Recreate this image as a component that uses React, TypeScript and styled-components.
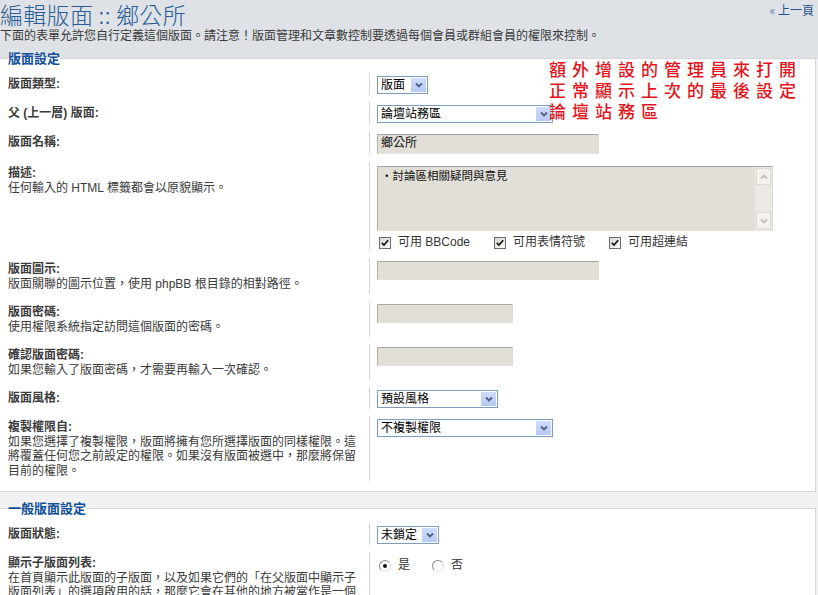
import React from 'react'
import styled, { createGlobalStyle } from 'styled-components'

const GlobalStyle = createGlobalStyle`
  html {
    min-height: 100%;
    background: linear-gradient(to bottom, #dee2e6 0, #dee2e6 59px, #f1f1f1 59px);
  }
  body {
    margin: 0;
    font-family: 'Liberation Sans', 'Noto Sans CJK TC', sans-serif;
    font-size: 12px;
    color: #333;
    overflow: hidden;
  }
`

const Chevron = ({ up = false }: { up?: boolean }) => (
  <svg width="8" height="6" viewBox="0 0 8 6">
    <path
      d={up ? 'M1 4.5 L4 1.5 L7 4.5' : 'M1 1.5 L4 4.5 L7 1.5'}
      fill="none"
      stroke="currentColor"
      strokeWidth="1.8"
    />
  </svg>
)

const Select = ({ width, value }: { width: number; value: string }) => (
  <SelectBox $w={width}>
    <span>{value}</span>
    <SelectArrow>
      <Chevron />
    </SelectArrow>
  </SelectBox>
)

const Check = ({ label }: { label: string }) => (
  <Option>
    <CheckBox>
      <svg width="8" height="8" viewBox="0 0 8 8">
        <path d="M0.8 3.8 L3 6 L7.2 1.3" fill="none" stroke="#111" strokeWidth="1.7" />
      </svg>
    </CheckBox>
    {label}
  </Option>
)

const Radio = ({ label, checked }: { label: string; checked?: boolean }) => (
  <Option>
    <RadioDot $checked={checked} />
    {label}
  </Option>
)

interface RowProps {
  label: string
  explain?: string
  children: React.ReactNode
}

const Row = ({ label, explain, children }: RowProps) => (
  <Item>
    <Term>
      <Label>{label}</Label>
      {explain && <Explain>{explain}</Explain>}
    </Term>
    <Field>{children}</Field>
  </Item>
)

export default function App() {
  return (
    <Page>
      <GlobalStyle />

      <Header>
        <Title>編輯版面 :: 鄉公所</Title>
        <BackLink href="#">
          <Guillemet>«</Guillemet> 上一頁
        </BackLink>
      </Header>
      <Intro>
        下面的表單允許您自行定義這個版面。請注意！版面管理和文章數控制要透過每個會員或群組會員的權限來控制。
      </Intro>

      <Fieldset>
        <Legend>版面設定</Legend>
        <Rows>
          <Row label="版面類型:">
            <Select width={51} value="版面" />
          </Row>
          <Row label="父 (上一層) 版面:">
            <Select width={176} value="論壇站務區" />
          </Row>
          <Row label="版面名稱:">
            <TextInput $w={222} $h={20}>鄉公所</TextInput>
          </Row>
          <Row label="描述:" explain="任何輸入的 HTML 標籤都會以原貌顯示。">
            <TextBox>
              <TextBody>・討論區相關疑問與意見</TextBody>
              <ScrollBar>
                <ScrollButton>
                  <Chevron up />
                </ScrollButton>
                <ScrollButton>
                  <Chevron />
                </ScrollButton>
              </ScrollBar>
            </TextBox>
            <Options $gap={24} $top={4}>
              <Check label="可用 BBCode" />
              <Check label="可用表情符號" />
              <Check label="可用超連結" />
            </Options>
          </Row>
          <Row label="版面圖示:" explain="版面關聯的圖示位置，使用 phpBB 根目錄的相對路徑。">
            <TextInput $w={222} $h={19} />
          </Row>
          <Row label="版面密碼:" explain="使用權限系統指定訪問這個版面的密碼。">
            <TextInput $w={136} $h={19} />
          </Row>
          <Row label="確認版面密碼:" explain="如果您輸入了版面密碼，才需要再輸入一次確認。">
            <TextInput $w={136} $h={19} />
          </Row>
          <Row label="版面風格:">
            <Select width={121} value="預設風格" />
          </Row>
          <Row
            label="複製權限自:"
            explain="如果您選擇了複製權限，版面將擁有您所選擇版面的同樣權限。這將覆蓋任何您之前設定的權限。如果沒有版面被選中，那麼將保留目前的權限。"
          >
            <Select width={176} value="不複製權限" />
          </Row>
        </Rows>
      </Fieldset>

      <Fieldset>
        <Legend>一般版面設定</Legend>
        <Rows>
          <Row label="版面狀態:">
            <Select width={62} value="未鎖定" />
          </Row>
          <Row
            label="顯示子版面列表:"
            explain="在首頁顯示此版面的子版面，以及如果它們的「在父版面中顯示子版面列表」的選項啟用的話，那麼它會在其他的地方被當作是一個連結顯示。"
          >
            <Options $gap={22} $top={3}>
              <Radio label="是" checked />
              <Radio label="否" />
            </Options>
          </Row>
        </Rows>
      </Fieldset>

      <Note>
        額外增設的管理員來打開
        <br />
        正常顯示上次的最後設定
        <br />
        論壇站務區
      </Note>
    </Page>
  )
}

const Page = styled.div`
  position: relative;
  width: 817px;
  margin-left: -1px;
`

const Header = styled.div`
  display: flex;
  justify-content: space-between;
  align-items: flex-start;
  padding: 0 2px 0 1px;
`

const Title = styled.h1`
  margin: 0;
  font-family: 'Noto Sans CJK TC', sans-serif;
  font-size: 23px;
  font-weight: 300;
  line-height: 28px;
  letter-spacing: 0.3px;
  color: #2a5d96;
`

const BackLink = styled.a`
  margin-top: 2px;
  font-family: 'Noto Sans CJK TC', sans-serif;
  font-size: 12px;
  line-height: 16px;
  color: #1d558d;
  text-decoration: none;
`

const Guillemet = styled.span`
  color: #5a7fa8;
`

const Intro = styled.p`
  margin: 1px 0 7px 1px;
  font-size: 12px;
  line-height: 15px;
  color: #3a3a3a;
`

const Fieldset = styled.fieldset`
  margin: 0 0 9px;
  padding: 7px 0 10px 8px;
  border: 1px solid #d7d7d7;
  background: #fff;
  min-width: 0;
`

const Legend = styled.legend`
  padding: 0;
  font-size: 13px;
  font-weight: bold;
  line-height: 15px;
  color: #115098;
`

const Rows = styled.div`
  display: flex;
  flex-direction: column;
  gap: 7px;
`

const Item = styled.dl`
  display: grid;
  grid-template-columns: 361px 1fr;
  margin: 0;
`

const Term = styled.dt`
  padding: 4px 10px 3px 0;
  line-height: 14.5px;
  color: #333;
`

const Label = styled.label`
  display: block;
  font-weight: bold;
  color: #3b3b3b;
`

const Explain = styled.span`
  display: block;
  color: #3a3a3a;
`

const Field = styled.dd`
  margin: 0;
  padding: 3px 0 1px 7px;
  border-left: 1px solid #d4d4d4;
`

const SelectBox = styled.div<{ $w: number }>`
  box-sizing: border-box;
  width: ${p => p.$w}px;
  height: 18px;
  display: flex;
  align-items: stretch;
  justify-content: space-between;
  padding: 1px 1px 1px 3px;
  border: 1px solid #7f9db9;
  background: #fff;
  color: #000;
  line-height: 15px;
`

const SelectArrow = styled.span`
  width: 15px;
  display: flex;
  align-items: center;
  justify-content: center;
  background: linear-gradient(to bottom, #cfdcfc, #b7c9f5);
  color: #4d6185;
`

const TextInput = styled.div<{ $w: number; $h: number }>`
  box-sizing: border-box;
  width: ${p => p.$w}px;
  height: ${p => p.$h}px;
  padding: 1px 3px;
  border: 1px solid;
  border-color: #a9a7a2 #dcd9d3 #e6e3de #b2b0ab;
  background: #e2dfd9;
  color: #111;
  line-height: 15px;
`

const TextBox = styled.div`
  box-sizing: border-box;
  width: 396px;
  height: 65px;
  margin-top: 1px;
  display: flex;
  border: 1px solid;
  border-color: #a9a7a2 #dcd9d3 #e6e3de #b2b0ab;
  background: #e2dfd9;
`

const TextBody = styled.div`
  flex: 1;
  padding: 2px 3px;
  font-size: 11.5px;
  color: #111;
  line-height: 15px;
`

const ScrollBar = styled.div`
  width: 17px;
  display: flex;
  flex-direction: column;
  justify-content: space-between;
  padding: 1px 0;
  background: #ebe9e4;
`

const ScrollButton = styled.div`
  height: 15px;
  margin: 0 1px;
  display: flex;
  align-items: center;
  justify-content: center;
  border: 1px solid #dcdad4;
  background: #f3f2ee;
  color: #c2c0ba;
`

const Options = styled.div<{ $gap: number; $top: number }>`
  display: flex;
  align-items: center;
  gap: ${p => p.$gap}px;
  margin: ${p => p.$top}px 0 0 2px;
  line-height: 15px;
  color: #333;
`

const Option = styled.span`
  display: inline-flex;
  align-items: center;
  gap: 7px;
`

const CheckBox = styled.span`
  box-sizing: border-box;
  width: 12px;
  height: 12px;
  display: flex;
  align-items: center;
  justify-content: center;
  border: 1px solid #6d6d6d;
  background: linear-gradient(135deg, #d6d6d2, #fbfbfb);
`

const RadioDot = styled.span<{ $checked?: boolean }>`
  box-sizing: border-box;
  position: relative;
  width: 12px;
  height: 12px;
  border-radius: 50%;
  border: 1px solid;
  border-color: #8a8a8a #d9d9d9 #e8e8e8 #8a8a8a;
  background: #fff;

  &::after {
    content: '';
    display: ${p => (p.$checked ? 'block' : 'none')};
    position: absolute;
    left: 3px;
    top: 3px;
    width: 4px;
    height: 4px;
    border-radius: 50%;
    background: #111;
  }
`

// hand-written note laid over the form
const Note = styled.div`
  position: absolute;
  top: 58px;
  left: 550px;
  font-family: 'Noto Sans CJK TC', sans-serif;
  font-size: 17px;
  font-weight: 500;
  line-height: 21px;
  letter-spacing: 6px;
  color: #e3141c;
  white-space: nowrap;
`
